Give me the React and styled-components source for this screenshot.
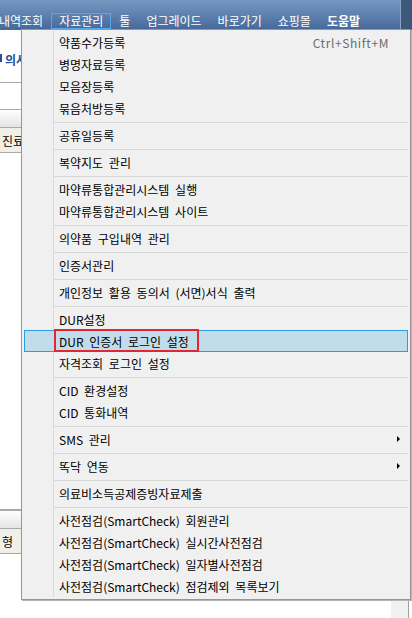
import React from 'react';
import styled, { createGlobalStyle } from 'styled-components';

const GlobalStyle = createGlobalStyle`
  html, body {
    margin: 0;
    padding: 0;
    background: #fff;
  }
  body {
    font-family: "Noto Sans CJK KR", "Noto Sans", sans-serif;
    font-size: 12px;
    color: #000;
  }
`;

const Screen = styled.div`
  position: relative;
  width: 412px;
  height: 618px;
  overflow: hidden;
  background: #fff;
  display: flex;
  flex-direction: column;
`;

// 상단 메뉴바
const TopBar = styled.div`
  display: flex;
  align-items: flex-end;
  height: 30px;
  flex-shrink: 0;
  background: linear-gradient(#7699c2, #45689a);
`;

const TopMenu = styled.div`
  display: flex;
  margin-left: -9px;
  margin-bottom: 1px;
`;

const TopItem = styled.span`
  height: 16px;
  box-sizing: border-box;
  padding: 0 7px;
  border: 1px solid ${p => (p.$active ? '#5aa6e0' : 'transparent')};
  color: #fff;
  font-size: 12px;
  line-height: 14px;
  font-weight: ${p => (p.$bold ? 700 : 400)};
  white-space: nowrap;
`;

const TopEdge = styled.div`
  margin-left: auto;
  align-self: stretch;
  width: 11px;
  background: #3c5979;
  border-left: 1px solid #86a3c4;
`;

// 메뉴 아래 본문
const Content = styled.div`
  flex: 1;
  display: flex;
`;

const Main = styled.div`
  flex: 1;
  display: flex;
  flex-direction: column;
`;

const ScrollTrack = styled.div`
  width: 17px;
  background: #f0f0f0;
  border-right: 1px solid #a0a0a0;
`;

const Gutter = styled.div`
  width: 3px;
`;

const Gap = styled.div`
  height: ${p => p.$h}px;
  flex-shrink: 0;
  border-bottom: ${p => (p.$line ? '1px solid #a9a9a9' : 'none')};
`;

const Title = styled.div`
  height: 22px;
  display: flex;
  align-items: center;
  gap: 3px;
  color: #2a4f96;
  font-weight: 700;
  font-size: 12px;
  white-space: nowrap;

  &::before {
    content: '';
    width: 2px;
    height: 8px;
    margin-top: -2px;
    background: #2a4f96;
  }
`;

const GridHeader = styled.div`
  height: 17px;
  flex-shrink: 0;
  background: linear-gradient(#ffffff, #e4e4e4);
  border-bottom: 1px solid #a9a9a9;
  border-top: ${p => (p.$double ? '1px solid #a9a9a9' : 'none')};
`;

const GridRow = styled.div`
  height: 24px;
  flex-shrink: 0;
  display: flex;
  align-items: center;
  padding-left: 2px;
  background: #f1f0e8;
  border-bottom: 1px solid #a9a9a9;
  white-space: nowrap;
`;

// 드롭다운 메뉴
const Menu = styled.div`
  position: absolute;
  left: 21px;
  top: 29px;
  width: 390px;
  box-sizing: border-box;
  border: 1px solid #979797;
  padding: 1px 2px 2px;
  background: linear-gradient(#d9d9d9, #d9d9d9) 29px 0 / 1px 100% no-repeat content-box, #f0f0f0;
  box-shadow: 1px 1px 0 #b4b4b4;
`;

const Item = styled.div`
  height: 22px;
  box-sizing: border-box;
  display: flex;
  align-items: stretch;
  justify-content: space-between;
  padding-left: 35px;
  padding-right: ${p => (p.$sub ? 8 : 19)}px;
  background: ${p => (p.$active ? '#c1ddec' : 'transparent')};
  outline: ${p => (p.$active ? '1px solid #28a0dc' : 'none')};
  outline-offset: -1px;
`;

const Label = styled.span`
  position: relative;
  display: flex;
  align-items: center;
  white-space: nowrap;
  word-spacing: 3px;
  color: #000;

  ${p => p.$marked && `
    &::after {
      content: '';
      position: absolute;
      left: -5px;
      right: -10px;
      top: -1px;
      bottom: 0;
      border: 2px solid #e3262f;
    }
  `}
`;

const Shortcut = styled.span`
  display: flex;
  align-items: center;
  color: #6d6d6d;
  letter-spacing: 0.6px;
`;

const SubArrow = styled.span`
  align-self: center;
  width: 0;
  height: 0;
  border-left: 3px solid #000;
  border-top: 3px solid transparent;
  border-bottom: 3px solid transparent;
`;

const Separator = styled.div`
  height: 1px;
  margin: 3px 0 1px 29px;
  background: #d7d7d7;
`;

const topMenus = [
  { label: '내역조회' },
  { label: '자료관리', active: true },
  { label: '툴' },
  { label: '업그레이드' },
  { label: '바로가기' },
  { label: '쇼핑몰' },
  { label: '도움말', bold: true },
];

const menuGroups = [
  [
    { label: '약품수가등록', shortcut: 'Ctrl+Shift+M' },
    { label: '병명자료등록' },
    { label: '모음장등록' },
    { label: '묶음처방등록' },
  ],
  [{ label: '공휴일등록' }],
  [{ label: '복약지도 관리' }],
  [{ label: '마약류통합관리시스템 실행' }, { label: '마약류통합관리시스템 사이트' }],
  [{ label: '의약품 구입내역 관리' }],
  [{ label: '인증서관리' }],
  [{ label: '개인정보 활용 동의서 (서면)서식 출력' }],
  [
    { label: 'DUR설정' },
    { label: 'DUR 인증서 로그인 설정', active: true, marked: true },
    { label: '자격조회 로그인 설정' },
  ],
  [{ label: 'CID 환경설정' }, { label: 'CID 통화내역' }],
  [{ label: 'SMS 관리', sub: true }],
  [{ label: '똑닥 연동', sub: true }],
  [{ label: '의료비소득공제증빙자료제출' }],
  [
    { label: '사전점검(SmartCheck) 회원관리' },
    { label: '사전점검(SmartCheck) 실시간사전점검' },
    { label: '사전점검(SmartCheck) 일자별사전점검' },
    { label: '사전점검(SmartCheck) 점검제외 목록보기' },
  ],
];

export default function App() {
  return (
    <>
      <GlobalStyle />
      <Screen>
        <TopBar>
          <TopMenu>
            {topMenus.map(m => (
              <TopItem key={m.label} $active={m.active} $bold={m.bold}>
                {m.label}
              </TopItem>
            ))}
          </TopMenu>
          <TopEdge />
        </TopBar>

        <Content>
          <Main>
            <Gap $h={18} />
            <Title>의사항</Title>
            <Gap $h={12} $line />
            <Gap $h={26} $line />
            <GridHeader />
            <GridRow>진료</GridRow>
            <Gap $h={356} $line />
            <GridHeader $double />
            <GridRow>형</GridRow>
          </Main>
          <ScrollTrack />
          <Gutter />
        </Content>

        <Menu>
          {menuGroups.map((group, gi) => (
            <React.Fragment key={gi}>
              {gi > 0 && <Separator />}
              {group.map(item => (
                <Item key={item.label} $active={item.active} $sub={item.sub}>
                  <Label $marked={item.marked}>{item.label}</Label>
                  {item.shortcut && <Shortcut>{item.shortcut}</Shortcut>}
                  {item.sub && <SubArrow />}
                </Item>
              ))}
            </React.Fragment>
          ))}
        </Menu>
      </Screen>
    </>
  );
}
